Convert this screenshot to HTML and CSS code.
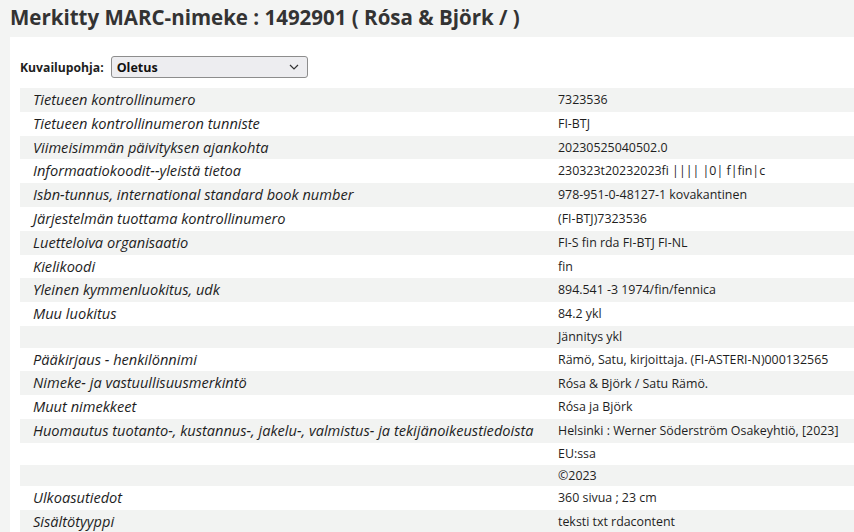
FILE: index.html
```html
<!DOCTYPE html>
<html lang="fi">
<head>
<meta charset="utf-8">
<title>Merkitty MARC-nimeke</title>
<link rel="stylesheet" href="styles.css">
</head>
<body>
<h1 class="page-title">Merkitty MARC-nimeke : 1492901 ( Rósa &amp; Björk / )</h1>
<div class="panel">
  <div class="framework">
    <label class="framework-label" for="fw">Kuvailupohja:</label>
    <div class="select">
      <span class="select-text">Oletus</span>
      <svg class="chevron" width="10" height="6" viewBox="0 0 10 6"><path d="M1 1 L5 5 L9 1" fill="none" stroke="#333" stroke-width="1.2"/></svg>
    </div>
  </div>
  <table class="marc">
    <tbody>
      <tr><td class="lbl">Tietueen kontrollinumero</td><td class="val">7323536</td></tr>
      <tr><td class="lbl">Tietueen kontrollinumeron tunniste</td><td class="val">FI-BTJ</td></tr>
      <tr><td class="lbl">Viimeisimmän päivityksen ajankohta</td><td class="val">20230525040502.0</td></tr>
      <tr><td class="lbl">Informaatiokoodit--yleistä tietoa</td><td class="val">230323t20232023fi |||| |0| f|fin|c</td></tr>
      <tr><td class="lbl">Isbn-tunnus, international standard book number</td><td class="val">978-951-0-48127-1 kovakantinen</td></tr>
      <tr><td class="lbl">Järjestelmän tuottama kontrollinumero</td><td class="val">(FI-BTJ)7323536</td></tr>
      <tr><td class="lbl">Luetteloiva organisaatio</td><td class="val">FI-S fin rda FI-BTJ FI-NL</td></tr>
      <tr><td class="lbl">Kielikoodi</td><td class="val">fin</td></tr>
      <tr><td class="lbl">Yleinen kymmenluokitus, udk</td><td class="val">894.541 -3 1974/fin/fennica</td></tr>
      <tr><td class="lbl">Muu luokitus</td><td class="val">84.2 ykl</td></tr>
      <tr><td class="lbl empty"></td><td class="val">Jännitys ykl</td></tr>
      <tr><td class="lbl">Pääkirjaus - henkilönnimi</td><td class="val">Rämö, Satu, kirjoittaja. (FI-ASTERI-N)000132565</td></tr>
      <tr><td class="lbl">Nimeke- ja vastuullisuusmerkintö</td><td class="val">Rósa &amp; Björk / Satu Rämö.</td></tr>
      <tr><td class="lbl">Muut nimekkeet</td><td class="val">Rósa ja Björk</td></tr>
      <tr><td class="lbl">Huomautus tuotanto-, kustannus-, jakelu-, valmistus- ja tekijänoikeustiedoista</td><td class="val">Helsinki : Werner Söderström Osakeyhtiö, [2023]</td></tr>
      <tr><td class="lbl empty"></td><td class="val">EU:ssa</td></tr>
      <tr><td class="lbl empty"></td><td class="val">©2023</td></tr>
      <tr><td class="lbl">Ulkoasutiedot</td><td class="val">360 sivua ; 23 cm</td></tr>
      <tr><td class="lbl">Sisältötyyppi</td><td class="val">teksti txt rdacontent</td></tr>
    </tbody>
  </table>
</div>
</body>
</html>
```
FILE: styles.css
```css
html, body {
  margin: 0;
  padding: 0;
}
body {
  background: #f3f4f3;
  font-family: "Open Sans", "Noto Sans", sans-serif;
  color: #1e1e1e;
  overflow: hidden;
}
.page-title {
  margin: 0;
  padding: 4px 0 0 10px;
  height: 33px;
  font-size: 20.5px;
  line-height: 27px;
  font-weight: 700;
  color: #333;
}
.panel {
  margin-left: 10px;
  background: #fff;
  padding: 19px 0 0 10px;
  min-height: 500px;
}
.framework {
  display: flex;
  align-items: center;
  gap: 7px;
  height: 22px;
}
.framework-label {
  font-size: 12.2px;
  font-weight: 700;
  color: #1e1e1e;
}
.select {
  box-sizing: border-box;
  width: 197px;
  height: 22px;
  border: 1px solid #8d8d8d;
  border-radius: 3px;
  background: #ededf0;
  display: flex;
  align-items: center;
  justify-content: space-between;
  padding: 0 8px 0 5px;
}
.select-text {
  font-size: 12.5px;
  font-weight: 700;
  color: #111;
}
.chevron {
  display: block;
}
.marc {
  margin-top: 10px;
  border-collapse: collapse;
  width: calc(100% + 30px);
}
.marc tr:nth-child(odd) {
  background: #f2f3f2;
}
.marc td {
  padding: 2px 0;
  vertical-align: middle;
}
.lbl {
  width: 519px;
  padding-left: 13px !important;
  font-style: italic;
  font-size: 14.6px;
  line-height: 19.8px;
  white-space: nowrap;
}
.val {
  padding-left: 6px !important;
  font-size: 12.4px;
  line-height: 17.7px;
  white-space: nowrap;
}
```
